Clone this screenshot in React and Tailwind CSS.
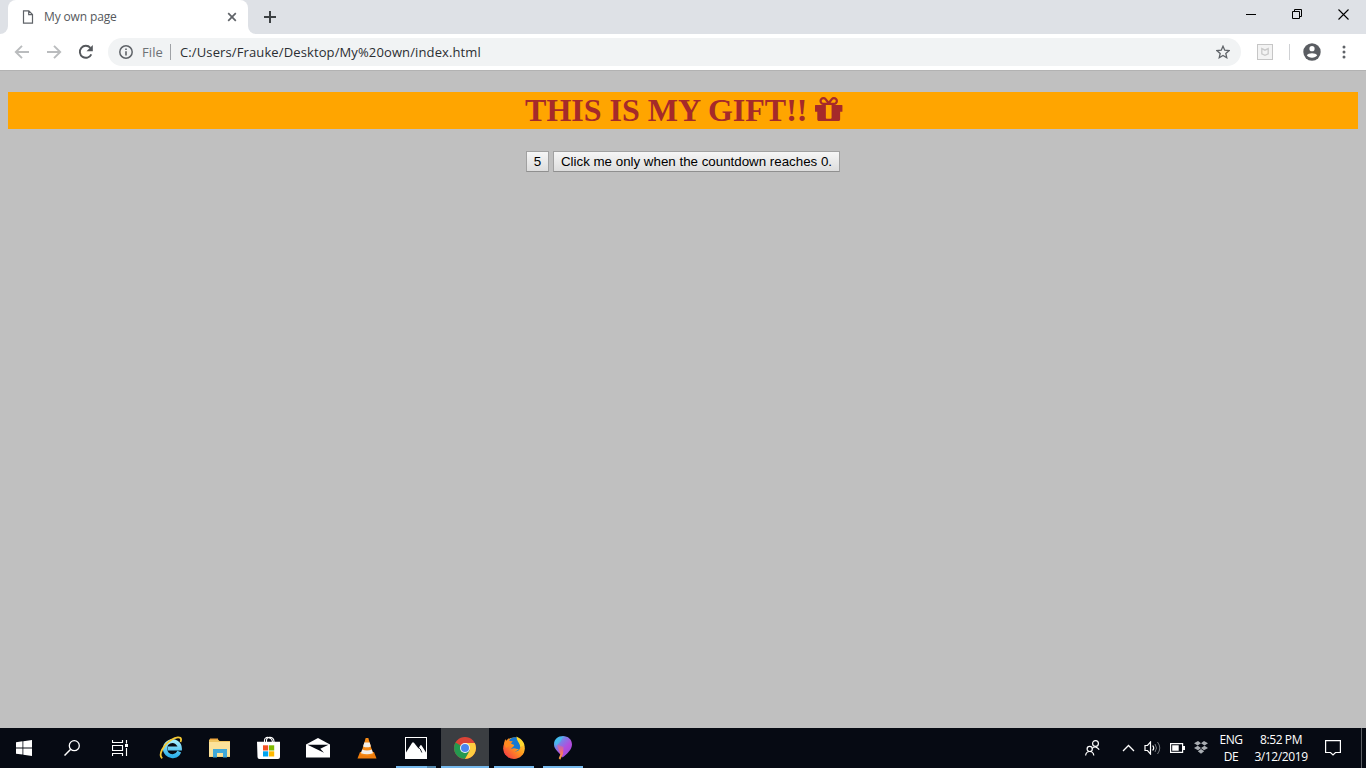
import React from "react";

function Glyph({ w, h, children }) {
  return (
    <svg width={w} height={h} viewBox={`0 0 ${w} ${h}`} fill="none" className="block shrink-0">
      {children}
    </svg>
  );
}

function TabStrip() {
  return (
    <div className="flex h-[34px] bg-[#dee1e6]">
      <div className="flex h-full w-2 items-end bg-white">
        <div className="h-full w-full rounded-br-lg bg-[#dee1e6]" />
      </div>
      <div className="h-full w-[240px] bg-[#dee1e6]">
        <div className="flex h-full items-center rounded-t-lg bg-white pl-[14px]">
          <Glyph w={12} h={14}>
            <path d="M1.5.8h5.3l3.7 3.7v8.7h-9zM6.7.8v3.8h3.8" stroke="#5f6368" strokeWidth="1.2" />
          </Glyph>
          <span className="ml-[10px] w-[183px] whitespace-nowrap text-[12px] leading-4 tracking-[-0.14px] text-[#55585c]">My own page</span>
          <Glyph w={10} h={10}>
            <path d="M1.2 1.2l7.6 7.6M8.8 1.2L1.2 8.8" stroke="#5f6368" strokeWidth="1.7" />
          </Glyph>
        </div>
      </div>
      <div className="h-full w-2 bg-white">
        <div className="h-full w-full rounded-bl-lg bg-[#dee1e6]" />
      </div>
      <div className="flex flex-1 pl-2 pt-[11px]">
        <Glyph w={12} h={12}>
          <path d="M6 0v12M0 6h12" stroke="#3c4043" strokeWidth="2" />
        </Glyph>
      </div>
      <div className="flex h-7 items-center">
        <div className="flex w-[46px] justify-center">
          <Glyph w={10} h={10}><path d="M0 5.5h10" stroke="#000" /></Glyph>
        </div>
        <div className="flex w-[46px] justify-center">
          <Glyph w={10} h={10}><path d="M.5 2.5h7v7h-7zM2.5 2.5v-2h7v7h-2" stroke="#000" /></Glyph>
        </div>
        <div className="flex w-[46px] justify-center">
          <Glyph w={11} h={11}><path d="M.5.5l10 10M10.5.5l-10 10" stroke="#000" strokeWidth="1.1" /></Glyph>
        </div>
      </div>
    </div>
  );
}

function Toolbar() {
  return (
    <div className="flex h-9 items-center bg-white pl-[14px]">
      <Glyph w={16} h={16}>
        <path d="M15 8H2.5M8 1.8L1.8 8 8 14.2" stroke="#babcbe" strokeWidth="1.9" />
      </Glyph>
      <div className="w-4" />
      <Glyph w={16} h={16}>
        <path d="M1 8h12.5M8 1.8L14.2 8 8 14.2" stroke="#babcbe" strokeWidth="1.9" />
      </Glyph>
      <div className="w-4" />
      <Glyph w={16} h={16}>
        <path d="M13.3 10.3A6 6 0 1 1 12.4 3.9" stroke="#55585c" strokeWidth="1.9" />
        <path d="M14.8 1v6.3H8.5z" fill="#55585c" />
      </Glyph>
      <div className="ml-[14px] flex h-7 w-[1133px] items-center rounded-full bg-[#f1f3f4] pl-[11px] text-[13px] leading-5">
        <Glyph w={14} h={14}>
          <circle cx="7" cy="7" r="6.2" stroke="#5f6368" strokeWidth="1.5" />
          <path d="M7 6.2v4.3M7 3.5v1.6" stroke="#5f6368" strokeWidth="1.6" />
        </Glyph>
        <span className="ml-[9px] w-7 whitespace-nowrap tracking-[0.1px] text-[#6d7175]">File</span>
        <div className="h-4 w-px bg-[#9fa2a6]" />
        <span className="ml-[9px] flex-1 whitespace-nowrap tracking-[0.12px] text-[#2b2e32]">C:/Users/Frauke/Desktop/My%20own/index.html</span>
        <div className="pr-[11px]">
          <Glyph w={14} h={14}>
            <path d="M7 1.2l1.75 4 4.3.4-3.25 2.85.95 4.25L7 10.45 3.25 12.7l.95-4.25L.95 5.6l4.3-.4z" stroke="#5f6368" strokeWidth="1.3" />
          </Glyph>
        </div>
      </div>
      <div className="ml-4">
        <Glyph w={16} h={16}>
          <rect x=".5" y=".5" width="15" height="15" fill="#f3f3f3" stroke="#c6c6c6" />
          <path d="M4.8 4.6v5.3L8 11.3l3.2-1.4V4.6L8 6.2z" stroke="#c9c9c9" strokeWidth="1.3" />
        </Glyph>
      </div>
      <div className="ml-4 h-4 w-px bg-[#cfd1d4]" />
      <div className="ml-[13px]">
        <Glyph w={18} h={18}>
          <circle cx="9" cy="9" r="8.7" fill="#5a5d62" />
          <circle cx="9" cy="5.7" r="2.6" fill="#fff" />
          <path d="M3.8 12.3C5 9.4 13 9.4 14.2 12.3 12.5 15.5 5.5 15.5 3.8 12.3z" fill="#fff" />
        </Glyph>
      </div>
      <div className="ml-[21px]">
        <Glyph w={4} h={14}>
          <circle cx="2" cy="2" r="1.5" fill="#5f6368" />
          <circle cx="2" cy="7" r="1.5" fill="#5f6368" />
          <circle cx="2" cy="12" r="1.5" fill="#5f6368" />
        </Glyph>
      </div>
    </div>
  );
}

function GiftIcon() {
  return (
    <svg width="27.43" height="24" viewBox="128 192 1536 1344" fill="#a52a2a" className="mt-[5px] block">
      <path d="M1056 1356v-716h-320v716q0 25 18 38.5t46 13.5h192q28 0 46-13.5t18-38.5zm-456-844h195l-126-161q-26-31-69-31-40 0-68 28t-28 68 28 68 68 28zm688-96q0-40-28-68t-68-28q-43 0-69 31l-125 161h194q40 0 68-28t28-68zm376 256v320q0 14-9 23t-23 9h-96v416q0 40-28 68t-68 28h-1088q-40 0-68-28t-28-68v-416h-96q-14 0-23-9t-9-23v-320q0-14 9-23t23-9h440q-93 0-158.5-65.5t-65.5-158.5 65.5-158.5 158.5-65.5q107 0 168 77l128 165 128-165q61-77 168-77 93 0 158.5 65.5t65.5 158.5-65.5 158.5-158.5 65.5h440q14 0 23 9t9 23z" />
    </svg>
  );
}

const buttonStyle =
  "flex h-[21px] items-center justify-center whitespace-nowrap border border-[#a1a1a1] border-b-[#8f8f8f] bg-linear-to-b from-[#f6f6f6] to-[#dddddd] font-['Liberation_Sans',sans-serif] text-[13.333px] leading-[15px] text-black";

function Page() {
  return (
    <main className="flex-1 border-t border-[#b2b2b2] bg-[#c0c0c0] px-2 pt-[21px]">
      <h1 className="flex h-[37px] justify-center gap-2 bg-[#ffa500] pl-[2px] font-['Liberation_Serif',serif] text-[32px] font-bold leading-[37px] text-[#a52a2a]">
        THIS IS MY GIFT!!
        <GiftIcon />
      </h1>
      <div className="mt-[22px] flex justify-center gap-1">
        <button className={`${buttonStyle} w-[23px]`}>5</button>
        <button className={`${buttonStyle} w-[287px]`}>Click me only when the countdown reaches 0.</button>
      </div>
    </main>
  );
}

function TaskButton({ children, active, running, grouped }) {
  return (
    <div className={`mr-px flex h-10 w-12 flex-col items-center ${active ? "bg-[#3b3e42]" : ""}`}>
      <div className="flex h-[38px] items-center pt-[2px]">{children}</div>
      {(active || running) && (
        <div className={`flex h-[2px] bg-[#76b9ed] ${active ? "w-full" : "w-10"} justify-end`}>
          {grouped && <div className="h-full w-[9px] bg-[#5588ad]" />}
        </div>
      )}
    </div>
  );
}

function Taskbar() {
  return (
    <footer className="flex h-10 bg-[#060a13] text-white">
      <div className="flex h-10 w-12 items-center justify-center">
        <Glyph w={16} h={16}>
          <path d="M0 2.2l6.5-.9v6.2H0zM7.3 1.2L16 0v7.5H7.3zM0 8.4h6.5v6.2L0 13.7zM7.3 8.4H16V16l-8.7-1.2z" fill="#fff" />
        </Glyph>
      </div>
      <div className="flex h-10 w-12 items-center justify-center">
        <Glyph w={16} h={16}>
          <circle cx="10.3" cy="5.7" r="5" stroke="#fff" strokeWidth="1.3" />
          <path d="M6.7 9.3L.5 15.5" stroke="#fff" strokeWidth="1.5" />
        </Glyph>
      </div>
      <div className="flex h-10 w-[51px] items-center pl-4">
        <Glyph w={16} h={16}>
          <path d="M.5 0v2.5h10V0M.5 5.500h10v5H.5zM.5 16v-2.500h10V16M14.5 0v3.5M14.5 8v8" stroke="#fff" strokeWidth="1.15" />
          <rect x="13" y="4" width="3" height="3" fill="#fff" />
        </Glyph>
      </div>
      <TaskButton>
        <Glyph w={24} h={24}>
          <defs>
            <linearGradient id="ie" x1="0" y1="0" x2="0" y2="1"><stop stopColor="#a3ecfc" /><stop offset="1" stopColor="#2fb2ec" /></linearGradient>
          </defs>
          <path d="M20.3 15.6A7.5 7.5 0 1 1 20.9 12.6H8.500" stroke="url(#ie)" strokeWidth="4" />
          <path d="M3.200 22.400C-1 19 4 9 12.500 3.700c4.500-2.800 9-3.300 9.500-.7.200 1 0 2-.6 3" stroke="#f5c935" strokeWidth="1.8" />
        </Glyph>
      </TaskButton>
      <TaskButton>
        <Glyph w={24} h={22}>
          <path d="M1 2.5h9l1.500 1.500H22v16H1z" fill="#efc35f" />
          <path d="M2 1.500h8V3H2z" fill="#f0a940" />
          <path d="M1 5h21v14.500H1z" fill="#fce29a" />
          <path d="M5 20.500v-8.500h14v8.500h-4v-4.500H9v4.500z" fill="#41a9d8" />
        </Glyph>
      </TaskButton>
      <TaskButton>
        <Glyph w={24} h={24}>
          <path d="M7.500 7V4a3 3 0 0 1 5-2q3 1 3 5M9.500 7V5a3.500 3.500 0 0 1 3-3.700 4 4 0 0 1 4.500 4V7" stroke="#fff" strokeWidth="1.100" />
          <path d="M0 5.800h23v15.200q0 2-2 2H2.500q-2 0-2-2z" fill="#fff" />
          <path d="M6 9.300h5.200v5.200H6z" fill="#f25022" /><path d="M12 9.300h5.200v5.200H12z" fill="#7fba00" />
          <path d="M6 15.300h5.200v5.200H6z" fill="#00a4ef" /><path d="M12 15.300h5.200v5.200H12z" fill="#ffb900" />
        </Glyph>
      </TaskButton>
      <TaskButton>
        <Glyph w={24} h={20}>
          <path d="M0 6.500L12 0l12 6.500V19.500H0z" fill="#fff" />
          <path d="M1.500 6.800h21L14.300 10.800l3.700 4z" fill="#060a13" />
        </Glyph>
      </TaskButton>
      <TaskButton>
        <Glyph w={20} h={22}>
          <path d="M3 15h14l2.500 6.500H.5z" fill="#ef7d0b" />
          <path d="M8.700 1h2.600l5 16.500q-6.300 2.500-12.600 0z" fill="#f58a16" />
          <path d="M7.300 5.500h5.400l1.200 4q-3.900 1.700-7.800 0zM5.100 12.500q4.900 2 9.800 0l1.100 3.800q-6 2-12 0z" fill="#f3efe8" />
        </Glyph>
      </TaskButton>
      <TaskButton running grouped>
        <Glyph w={22} h={22}>
          <rect x=".5" y=".5" width="21" height="21" fill="#060a13" stroke="#fff" />
          <path d="M1 15.500L7.300 5.500h1.500l4.700 6 1.800-3.200h1.200L21 15.500v6H1z" fill="#fff" />
          <path d="M13.300 10.500l2 1.500 1.500 3.500" stroke="#060a13" strokeWidth=".9" />
        </Glyph>
      </TaskButton>
      <TaskButton active>
        <Glyph w={22} h={22}>
          <circle cx="11" cy="11" r="11" fill="#db4437" />
          <path d="M11 11L1.500 5.500A11 11 0 0 0 11 22l5-8.500z" fill="#24994f" />
          <path d="M11 6h9.800A11 11 0 0 1 11 22l5-9z" fill="#ffcd40" />
          <circle cx="11" cy="11" r="5" fill="#f3f5f7" />
          <circle cx="11" cy="11" r="4" fill="#4b86ee" />
        </Glyph>
      </TaskButton>
      <TaskButton running>
        <Glyph w={24} h={24}>
          <defs>
            <linearGradient id="fox" x1="1" y1="0" x2="0" y2="1"><stop stopColor="#ffe93b" /><stop offset=".45" stopColor="#ff9a1e" /><stop offset="1" stopColor="#f3254b" /></linearGradient>
          </defs>
          <circle cx="12" cy="12.200" r="10.800" fill="url(#fox)" />
          <path d="M6.500 5C9 1 13 1 15 1.500c0 3 3.300 4.500 3.300 9 0 3.500-3 5.500-5.500 4.800 2 0 3.200-1.300 4-2.300-2 .3-2.800-.8-4.800-.8-1 0-2 .8-3 .3 1.500-.5 1.200-1.500 2.700-2.300.7-.4.600-1.400-.7-1.700-1.500-.300-2.500-1.500-4.500-3.500z" fill="#1678d2" />
          <path d="M2 7.500L3.200 3 4.500 5.500 6.700 2q.3 2 1 3l3 .3c-.7 1.700-2.500 2-2.700 4L4 12z" fill="#ff8a20" />
          <path d="M14.500.500C18 2 21.500 5 22.300 9l-4 2C18 7 14.500 5 14.500.500z" fill="#ffd92f" />
        </Glyph>
      </TaskButton>
      <TaskButton running>
        <Glyph w={20} h={26}>
          <defs>
            <linearGradient id="paint" x1=".1" y1=".1" x2=".8" y2=".9"><stop stopColor="#38c4ee" /><stop offset=".35" stopColor="#8378e5" /><stop offset=".65" stopColor="#b34ddd" /><stop offset="1" stopColor="#a04ddd" /></linearGradient>
            <linearGradient id="handle" x1="0" y1="0" x2="0" y2="1"><stop stopColor="#e96091" stopOpacity=".3" /><stop offset=".5" stopColor="#f2706f" /><stop offset="1" stopColor="#ffa52f" /></linearGradient>
          </defs>
          <path d="M1 9.500C1 4 5 1 10 1s9 3.500 9 8.500c0 5-5 9.500-9.500 13C6.500 17 1 15 1 9.500z" fill="url(#paint)" />
          <path d="M3.500 9l7 3-.5 7-2.800 5.700-1.500-1.500L7.500 19z" fill="url(#handle)" />
          <path d="M2 7q2-5 8-5-2 5-7 9z" fill="#3acbf0" opacity=".6" />
        </Glyph>
      </TaskButton>
      <div className="flex flex-1 items-center justify-end font-['Open_Sans',sans-serif]">
        <Glyph w={15} h={16}>
          <circle cx="10.5" cy="3.5" r="2.9" stroke="#fff" strokeWidth="1.2" />
          <path d="M7 8.500q4-3.500 7.200 1.200" stroke="#fff" strokeWidth="1.2" />
          <circle cx="4.700" cy="8.900" r="2.600" stroke="#fff" strokeWidth="1.2" />
          <path d="M.6 15.500q.5-4 4.100-4t4.100 4" stroke="#fff" strokeWidth="1.2" />
        </Glyph>
        <div className="ml-[22px]"><Glyph w={13} h={8}><path d="M1 7l5.500-5.500L12 7" stroke="#fff" strokeWidth="1.300" /></Glyph></div>
        <div className="ml-[9px]">
          <Glyph w={17} h={14}>
            <path d="M1 4.500h2.500l3-3.500v12l-3-3.500H1z" stroke="#fff" strokeWidth="1.2" />
            <path d="M8.700 4.500q2 2.500 0 5" stroke="#fff" strokeWidth="1.2" />
            <path d="M11 3q3 4 0 8M13.500 1q4.500 6 0 12" stroke="#777b80" />
          </Glyph>
        </div>
        <div className="ml-[9px]">
          <Glyph w={15} h={10}>
            <path d="M.6.6h12v8.800H.6z" stroke="#fff" strokeWidth="1.2" />
            <path d="M2.200 2.300h6.500v5.400H2.200zM13 3h2v4h-2z" fill="#fff" />
          </Glyph>
        </div>
        <div className="ml-[9px]">
          <Glyph w={14} h={14}>
            <path d="M4 0l3 2.200-3.300 2.300L0 2.300zM10 0l4 2.300-3.500 2.200L7 2.200zM3.700 4.700L7 7 4 9.300 0 7zM10.500 4.700L14 7l-4 2.300L7 7zM3.800 10.300L7 8l3.200 2.300L7 12.800z" fill="#a9adb2" />
          </Glyph>
        </div>
        <div className="ml-[7px] flex w-[32px] flex-col items-center whitespace-nowrap text-[12px] leading-[17px] tracking-[-0.4px]">
          <span>ENG</span>
          <span>DE</span>
        </div>
        <div className="ml-[6px] flex w-[56px] flex-col items-center whitespace-nowrap text-[12px] leading-[17px] tracking-[-0.4px]">
          <span>8:52 PM</span>
          <span>3/12/2019</span>
        </div>
        <div className="ml-4 mr-5">
          <Glyph w={16} h={16}><path d="M.6.7h14.800v11.800H10.500L8 15l-2.500-2.500H.6z" stroke="#fff" strokeWidth="1.2" /></Glyph>
        </div>
        <div className="mr-1 h-10 w-px bg-[#5b5e64]" />
      </div>
    </footer>
  );
}

export default function App() {
  return (
    <div className="flex h-[768px] w-[1366px] flex-col overflow-hidden font-['Open_Sans',sans-serif]">
      <TabStrip />
      <Toolbar />
      <Page />
      <Taskbar />
    </div>
  );
}
